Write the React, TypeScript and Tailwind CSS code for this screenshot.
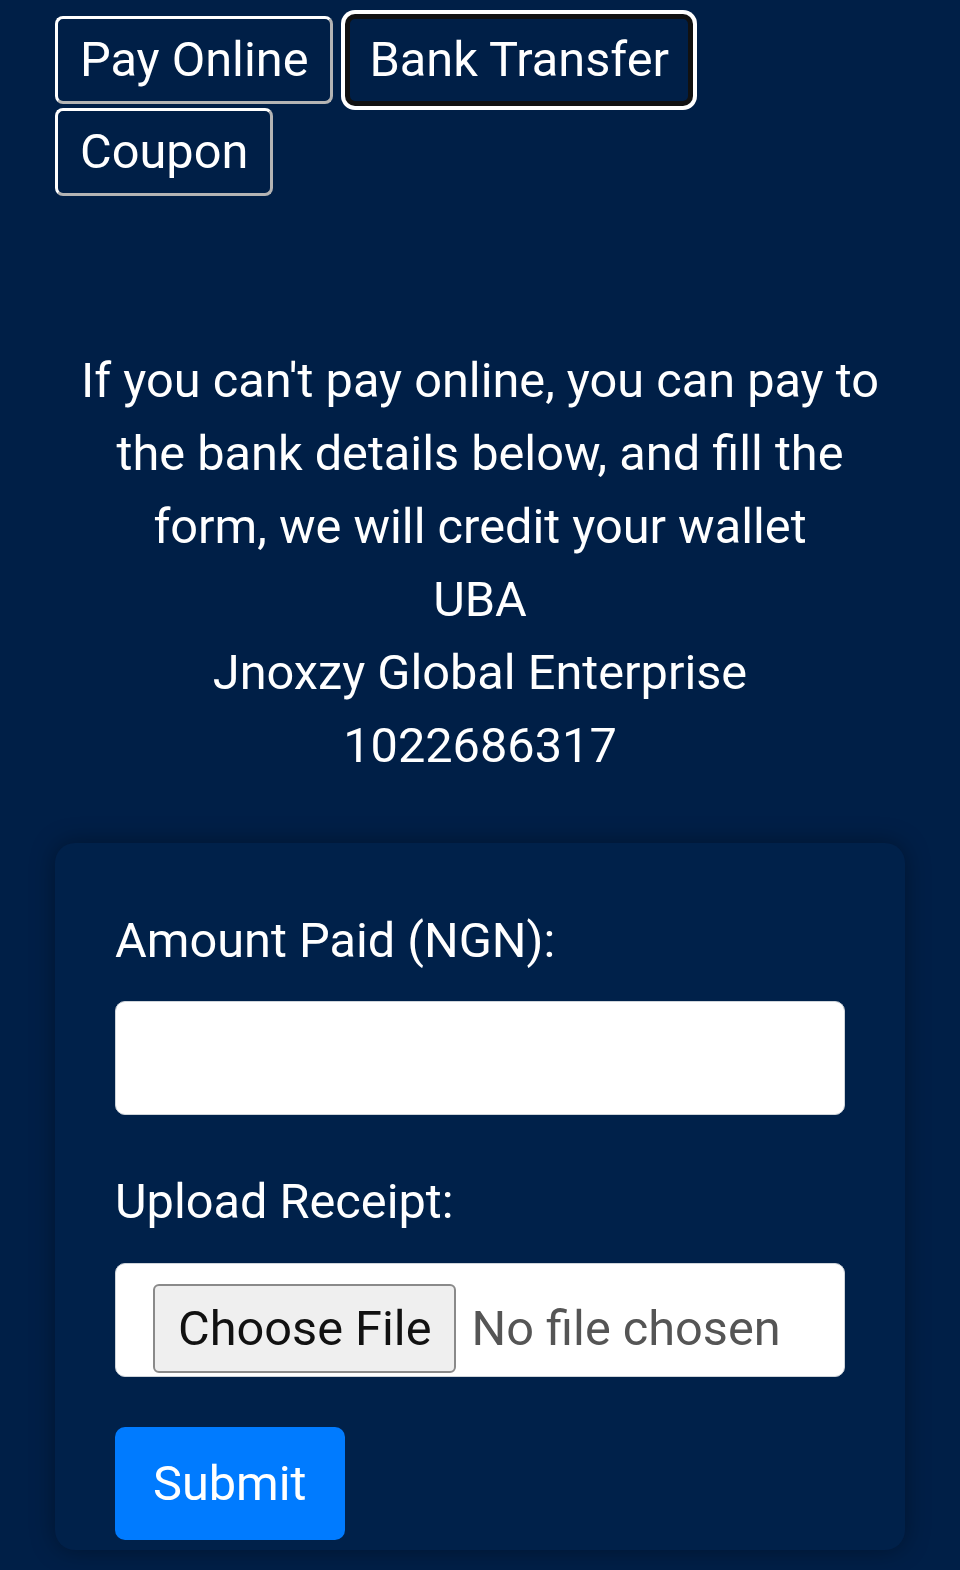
import React from "react";

export default function App() {
  return (
    <div
      className="w-[960px] min-h-[1570px] bg-[#001f47] text-white overflow-hidden"
      style={{ fontFamily: "Roboto, 'Noto Sans', sans-serif" }}
    >
      <div className="flex flex-wrap gap-x-[14px] gap-y-[4px] pl-[55px] pt-[16px] w-[740px]">
        <button className="h-[88px] px-[22px] text-[48.7px] leading-[56px] rounded-[8px] border-[3px] border-t-white border-l-white border-r-[#b4b4b4] border-b-[#b4b4b4] bg-[#001f47] text-white">
          Pay Online
        </button>
        <button className="h-[88px] px-[19px] text-[48.7px] leading-[56px] rounded-[8px] border-[3px] border-[#111] shadow-[0_0_0_2px_#111111,0_0_0_6px_#ffffff] bg-[#001f47] text-white">
          Bank Transfer
        </button>
        <button className="h-[88px] px-[22px] text-[48.7px] leading-[56px] rounded-[8px] border-[3px] border-t-white border-l-white border-r-[#b4b4b4] border-b-[#b4b4b4] bg-[#001f47] text-white">
          Coupon
        </button>
      </div>

      <p className="mt-[148px] mx-[40px] text-center text-[48.7px] leading-[73px]">
        If you can't pay online, you can pay to
        <br />
        the bank details below, and fill the
        <br />
        form, we will credit your wallet
        <br />
        UBA
        <br />
        Jnoxzy Global Enterprise
        <br />
        1022686317
      </p>

      <div className="mt-[61px] mx-[55px] bg-[#00214a] rounded-[20px] shadow-[0_0_24px_rgba(0,0,0,0.35)] pt-[61px] px-[60px] pb-[10px]">
        <label className="block text-[48.7px] leading-[73px] mb-[24px]">Amount Paid (NGN):</label>
        <div className="h-[114px] w-full bg-white rounded-[10px] border border-[#ced4da]" />
        <label className="block text-[48.7px] leading-[73px] mt-[50px] mb-[25px]">Upload Receipt:</label>
        <div className="h-[114px] w-full bg-white rounded-[10px] border border-[#ced4da] flex items-start pt-[20px] pl-[37px]">
          <div className="h-[89px] px-[23px] flex items-center bg-[#efefef] border-2 border-[#8a8a8a] rounded-[6px] text-[48.7px] text-[#111]">
            Choose File
          </div>
          <span className="ml-[15px] h-[89px] flex items-center text-[48.7px] text-[#555]">No file chosen</span>
        </div>
        <button className="mt-[50px] h-[113px] px-[38px] bg-[#007bff] rounded-[10px] text-[48.7px] text-white">
          Submit
        </button>
      </div>
    </div>
  );
}
